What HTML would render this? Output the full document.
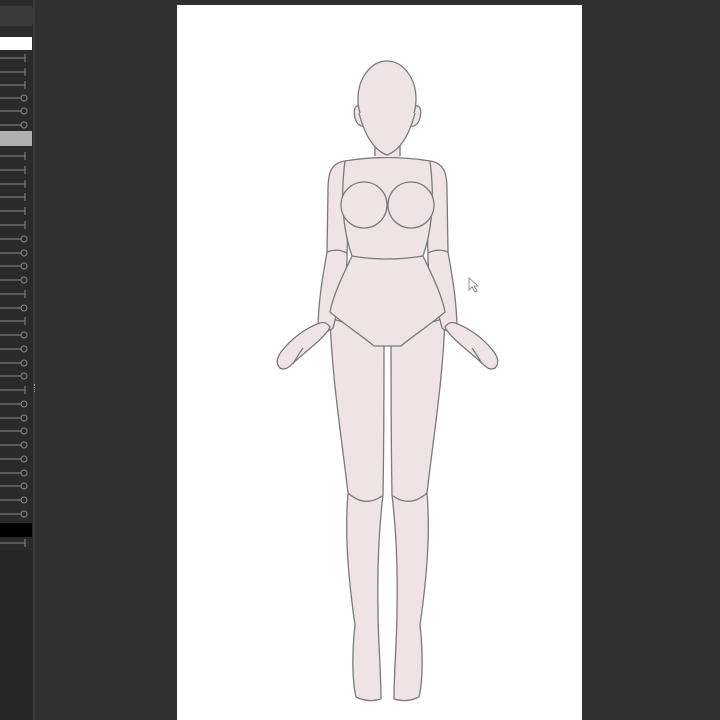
<!DOCTYPE html>
<html><head><meta charset="utf-8"><style>
html,body{margin:0;padding:0;width:720px;height:720px;overflow:hidden;background:#303030;font-family:"Liberation Sans",sans-serif}
.panel{position:absolute;left:0;top:0;width:33px;height:720px;background:#2a2a2a}
.gut{position:absolute;left:33px;top:0;width:2px;height:720px;background:#3a3a3a}
.canvas{position:absolute;left:177px;top:5px;width:405px;height:715px;background:#fff}
</style></head><body>
<div class="panel">
<div style="position:absolute;left:0;top:6px;width:33px;height:20px;background:#3a3a3a;border-radius:0 3px 3px 0"></div>
<div style="position:absolute;left:0;top:37px;width:32px;height:13px;background:#fff"></div>
<div style="position:absolute;left:0;top:131px;width:32px;height:15px;background:#b0b0b0"></div>
<div style="position:absolute;left:0;top:523px;width:32px;height:14px;background:#000"></div>
<div style="position:absolute;left:0;top:550px;width:32px;height:170px;background:#262626"></div>
<svg width="33" height="720" style="position:absolute;left:0;top:0">
<g stroke="#8a8a8a" stroke-width="1" fill="none">
<line x1="0" y1="58" x2="25" y2="58"/><line x1="25" y1="54" x2="25" y2="62"/>
<line x1="0" y1="72" x2="25" y2="72"/><line x1="25" y1="68" x2="25" y2="76"/>
<line x1="0" y1="85" x2="25" y2="85"/><line x1="25" y1="81" x2="25" y2="89"/>
<line x1="0" y1="98" x2="21" y2="98"/><circle cx="24" cy="98" r="3"/>
<line x1="0" y1="111" x2="21" y2="111"/><circle cx="24" cy="111" r="3"/>
<line x1="0" y1="125" x2="21" y2="125"/><circle cx="24" cy="125" r="3"/>
<line x1="0" y1="156" x2="25" y2="156"/><line x1="25" y1="152" x2="25" y2="160"/>
<line x1="0" y1="170" x2="25" y2="170"/><line x1="25" y1="166" x2="25" y2="174"/>
<line x1="0" y1="184" x2="25" y2="184"/><line x1="25" y1="180" x2="25" y2="188"/>
<line x1="0" y1="197" x2="25" y2="197"/><line x1="25" y1="193" x2="25" y2="201"/>
<line x1="0" y1="211" x2="25" y2="211"/><line x1="25" y1="207" x2="25" y2="215"/>
<line x1="0" y1="225" x2="25" y2="225"/><line x1="25" y1="221" x2="25" y2="229"/>
<line x1="0" y1="239" x2="21" y2="239"/><circle cx="24" cy="239" r="3"/>
<line x1="0" y1="253" x2="21" y2="253"/><circle cx="24" cy="253" r="3"/>
<line x1="0" y1="266" x2="21" y2="266"/><circle cx="24" cy="266" r="3"/>
<line x1="0" y1="280" x2="21" y2="280"/><circle cx="24" cy="280" r="3"/>
<line x1="0" y1="294" x2="25" y2="294"/><line x1="25" y1="290" x2="25" y2="298"/>
<line x1="0" y1="308" x2="21" y2="308"/><circle cx="24" cy="308" r="3"/>
<line x1="0" y1="321" x2="25" y2="321"/><line x1="25" y1="317" x2="25" y2="325"/>
<line x1="0" y1="335" x2="21" y2="335"/><circle cx="24" cy="335" r="3"/>
<line x1="0" y1="349" x2="21" y2="349"/><circle cx="24" cy="349" r="3"/>
<line x1="0" y1="363" x2="21" y2="363"/><circle cx="24" cy="363" r="3"/>
<line x1="0" y1="376" x2="21" y2="376"/><circle cx="24" cy="376" r="3"/>
<line x1="0" y1="390" x2="25" y2="390"/><line x1="25" y1="386" x2="25" y2="394"/>
<line x1="0" y1="404" x2="21" y2="404"/><circle cx="24" cy="404" r="3"/>
<line x1="0" y1="418" x2="21" y2="418"/><circle cx="24" cy="418" r="3"/>
<line x1="0" y1="431" x2="21" y2="431"/><circle cx="24" cy="431" r="3"/>
<line x1="0" y1="445" x2="21" y2="445"/><circle cx="24" cy="445" r="3"/>
<line x1="0" y1="459" x2="21" y2="459"/><circle cx="24" cy="459" r="3"/>
<line x1="0" y1="473" x2="21" y2="473"/><circle cx="24" cy="473" r="3"/>
<line x1="0" y1="486" x2="21" y2="486"/><circle cx="24" cy="486" r="3"/>
<line x1="0" y1="500" x2="21" y2="500"/><circle cx="24" cy="500" r="3"/>
<line x1="0" y1="514" x2="21" y2="514"/><circle cx="24" cy="514" r="3"/>
<line x1="0" y1="543" x2="25" y2="543"/><line x1="25" y1="539" x2="25" y2="547"/>
</g></svg>
</div>
<div class="gut"></div>
<div style="position:absolute;left:34px;top:384px;width:2px;height:8px;border-left:1px dotted #999"></div>
<div class="canvas"></div>
<svg width="720" height="720" style="position:absolute;left:0;top:0">
<defs>
<g id="half" fill="#efe3e6" stroke="#7a7a7a" stroke-width="1.3" stroke-linejoin="round">
<path d="M330,318 C332,380 342,440 348,493 C344,540 350,590 355,625 C352,650 352,680 356,697 Q368,703 381,699 C381,670 378,640 378,610 C377,560 380,520 383,495 C384,440 384,380 384,335 Z"/>
<path d="M348,493 Q365,508 382,496" fill="none"/>
<path d="M345,161 C330,163 328,175 328,190 L327,252 Q337,248 347,253 C349,230 343,200 345,161 Z"/>
<path d="M327,252 C322,280 318,305 318,330 Q328,333 333,328 C340,300 348,275 347,253 Q337,248 327,252 Z"/>
<path d="M320,323 C305,328 290,340 281,352 Q274,362 280,368 Q286,371 292,364 C300,357 308,350 314,345 C322,338 328,332 330,327 Q326,321 320,323 Z"/>
<path d="M303,348 Q296,358 293,364" fill="none"/>
<path d="M361,106 Q352,104 355,118 Q358,128 366,126 Z"/>
</g>
</defs>
<use href="#half"/>
<use href="#half" transform="translate(775,0) scale(-1,1)"/>
<g fill="#efe3e6" stroke="#7a7a7a" stroke-width="1.3" stroke-linejoin="round">
<path d="M345,161 Q387,154 430,161 C435,200 432,230 423,256 C432,275 442,295 445,312 C430,325 410,338 401,346 L374,346 C365,338 345,325 330,312 C333,295 343,275 352,256 C343,230 340,200 345,161 Z"/>
<path d="M352,256 Q387,262 423,256" fill="none"/>
<circle cx="364" cy="205" r="23"/>
<circle cx="411" cy="205" r="23"/>
<rect x="375" y="130" width="25" height="27" stroke="none"/>
<path d="M375,130 L375,156 M400,130 L400,156" fill="none"/>
<ellipse cx="387" cy="99" rx="29" ry="38"/>
</g>
<path d="M359,113 Q368,148 387,155 Q406,148 415,113" fill="#efe3e6" stroke="none"/>
<path d="M359,113 Q368,148 387,155 Q406,148 415,113" fill="none" stroke="#7a7a7a" stroke-width="1.3"/>
<path d="M469,278 L469,290 L472,287 L475,292 L477,291 L474,286 L478,286 Z" fill="#fff" stroke="#777" stroke-width="0.8"/>
</svg>
</body></html>
